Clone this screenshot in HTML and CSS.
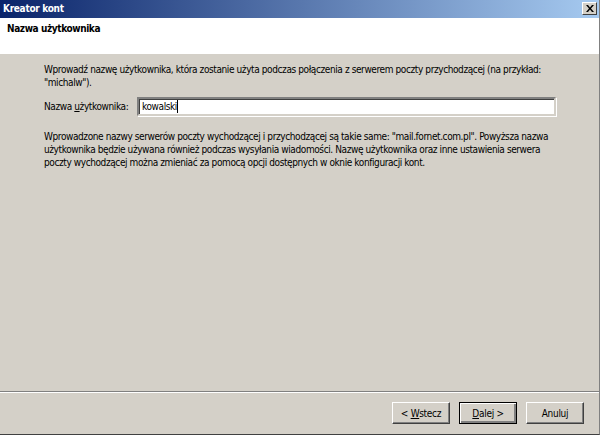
FILE: index.html
```html
<!DOCTYPE html>
<html lang="pl">
<head>
<meta charset="utf-8">
<title>Kreator kont</title>
<link rel="stylesheet" href="styles.css">
</head>
<body>
<div class="window">
  <div class="titlebar">
    <span class="title">Kreator kont</span>
    <span class="close-btn"><svg width="8" height="7" viewBox="0 0 8 7"><path d="M0 0h2l2 2.5 2-2.5h2l-3 3.5 3 3.5h-2l-2-2.5-2 2.5h-2l3-3.5z" fill="#000"/></svg></span>
  </div>
  <div class="header">Nazwa użytkownika</div>
  <div class="content">
    <p class="intro">Wprowadź nazwę użytkownika, która zostanie użyta podczas połączenia z serwerem poczty przychodzącej (na przykład: "michalw").</p>
    <div class="field">
      <label class="label" for="user">Nazwa <u>u</u>żytkownika:</label>
      <div class="input"><span class="value">kowalski</span><span class="caret"></span></div>
    </div>
    <p class="note">Wprowadzone nazwy serwerów poczty wychodzącej i przychodzącej są takie same: "mail.fornet.com.pl". Powyższa nazwa użytkownika będzie używana również podczas wysyłania wiadomości. Nazwę użytkownika oraz inne ustawienia serwera poczty wychodzącej można zmieniać za pomocą opcji dostępnych w oknie konfiguracji kont.</p>
  </div>
  <div class="separator"></div>
  <div class="buttons">
    <button class="btn">&lt; <u>W</u>stecz</button>
    <button class="btn btn-default"><u>D</u>alej &gt;</button>
    <button class="btn">Anuluj</button>
  </div>
</div>
</body>
</html>
```
FILE: styles.css
```css
* { box-sizing: border-box; }
html, body { margin: 0; padding: 0; }
body {
  width: 600px;
  height: 435px;
  overflow: hidden;
  background: #d4d0c8;
  font-family: "DejaVu Sans Condensed", "DejaVu Sans", sans-serif;
  font-size: 10px;
  letter-spacing: -0.4px;
  color: #000;
}
.window {
  width: 600px;
  height: 435px;
  display: flex;
  flex-direction: column;
  border-right: 1px solid #808080;
  border-bottom: 1px solid #404040;
  background: #d4d0c8;
}
.titlebar {
  height: 18px;
  flex: none;
  display: flex;
  align-items: center;
  justify-content: space-between;
  padding: 0 2px 1px 3px;
  background: linear-gradient(to right, #0a246a, #a6caf0);
}
.title {
  color: #fff;
  font-weight: bold;
  font-size: 10px;
  letter-spacing: -0.3px;
}
.close-btn {
  width: 15px;
  height: 13px;
  background: #d4d0c8;
  border: 1px solid;
  border-color: #fff #404040 #404040 #fff;
  display: flex;
  align-items: center;
  justify-content: center;
}
.header {
  height: 36px;
  flex: none;
  background: #fff;
  font-weight: bold;
  font-size: 10px;
  letter-spacing: -0.4px;
  padding: 5px 0 0 7px;
  border-bottom: 2px solid;
  border-image: linear-gradient(#808080 50%, #fff 50%) 1;
  border-left: 0;
  border-right: 0;
  border-top: 0;
}
.content {
  flex: 1;
  padding: 9px 43px 0 44px;
}
.intro { margin: 0; line-height: 13px; }
.field {
  display: flex;
  align-items: center;
  margin-top: 8px;
}
.label { width: 93px; flex: none; white-space: nowrap; }
.input {
  flex: 1;
  height: 19px;
  background: #fff;
  border: 2px solid;
  border-color: #808080 #d4d0c8 #d4d0c8 #808080;
  box-shadow: inset 1px 1px 0 #404040, 1px 1px 0 #fff;
  display: flex;
  align-items: center;
  padding-left: 3px;
}
.caret { width: 1px; height: 13px; background: #000; }
.note { margin: 14px 0 0; line-height: 13px; }
.separator {
  height: 2px;
  flex: none;
  border-top: 1px solid #808080;
  border-bottom: 1px solid #fff;
}
.buttons {
  height: 41px;
  flex: none;
  display: flex;
  justify-content: flex-end;
  gap: 9px;
  padding: 9px 15px 0 0;
}
.btn {
  width: 58px;
  height: 22px;
  font-family: inherit;
  font-size: 10px;
  letter-spacing: -0.3px;
  background: #d4d0c8;
  color: #000;
  border: 1px solid;
  border-color: #fff #404040 #404040 #fff;
  box-shadow: inset -1px -1px 0 #808080;
  padding: 0;
}
.btn-default {
  border: 1px solid #000;
  box-shadow: inset 1px 1px 0 #fff, inset -2px -2px 0 #808080;
}
```
